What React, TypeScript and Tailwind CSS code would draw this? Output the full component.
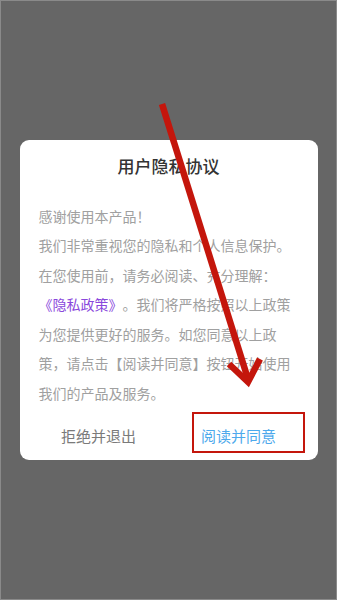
import React from 'react';

const FONT = { fontFamily: '"Noto Sans CJK SC", "Noto Sans", sans-serif' };

const bodyLines: React.ReactNode[] = [
  '感谢使用本产品！',
  '我们非常重视您的隐私和个人信息保护。',
  '在您使用前，请务必阅读、充分理解：',
  <>
    <span className="text-[#8a48dc]">《隐私政策》</span>。我们将严格按照以上政策
  </>,
  '为您提供更好的服务。如您同意以上政',
  '策，请点击【阅读并同意】按钮开始使用',
  '我们的产品及服务。',
];

function Arrow() {
  return (
    <svg
      className="pointer-events-none absolute inset-0"
      width="337"
      height="600"
      viewBox="0 0 337 600"
    >
      <g stroke="#c4160c" strokeWidth="6.5" fill="none" strokeLinecap="butt" strokeLinejoin="miter">
        <line x1="161" y1="103" x2="247" y2="378" />
        <polyline points="228,363 247,381 259,358" />
      </g>
    </svg>
  );
}

export default function App() {
  return (
    <div
      className="relative flex h-[600px] w-[337px] items-center justify-center overflow-hidden border border-[#8a8a8a] bg-[#666666] [text-spacing-trim:space-all]"
      style={FONT}
    >
      <div className="flex w-[298px] flex-col rounded-[9px] bg-white">
        <h1 className="pt-[15px] text-center text-[17px] leading-[22px] font-medium text-[#333333]">
          用户隐私协议
        </h1>
        <div className="mt-[25px] px-[19px] text-[14px] leading-[29.5px] text-[#a0a0a0]">
          {bodyLines.map((line, i) => (
            <p key={i} className="whitespace-nowrap">
              {line}
            </p>
          ))}
        </div>
        <div className="mt-[8px] mb-[4px] flex px-[9px]">
          <button className="h-[40px] flex-1 text-[15px] text-[#7a7a7a]">拒绝并退出</button>
          <button className="h-[40px] flex-1 text-[15px] text-[#4da9ec]">阅读并同意</button>
        </div>
      </div>
      {/* highlight box + arrow drawn over the dialog */}
      <div className="pointer-events-none absolute top-[411px] left-[191px] h-[41px] w-[113px] border-2 border-[#c4160c]" />
      <Arrow />
    </div>
  );
}
